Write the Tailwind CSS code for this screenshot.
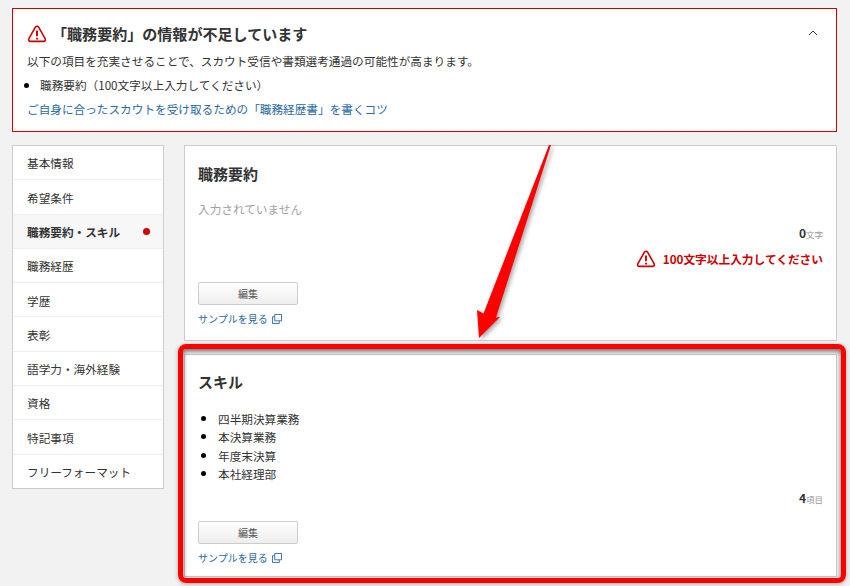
<!DOCTYPE html>
<html lang="ja">

<head>
    <meta charset="UTF-8" />
    <meta name="viewport" content="width=device-width, initial-scale=1.0" />
    <title>職務経歴書</title>
    <script src="https://cdn.jsdelivr.net/npm/@tailwindcss/browser@4"></script>
</head>

<body class="relative w-[850px] h-[586px] overflow-hidden bg-[#f2f2f2] font-['Noto_Sans_CJK_JP','Noto_Sans',sans-serif] text-[11.65px] text-[#333]">

    <div class="pt-2 pl-3 pr-[13px]">
        <!-- alert -->
        <section class="relative h-[124px] border border-[#cc0000] bg-white pl-[14px] pt-[15px]">
            <div class="flex items-center h-5">
                <svg class="w-5 h-5" viewBox="0 0 20 20" fill="none" stroke="#cc0000" stroke-width="1.6" stroke-linejoin="round">
                    <path d="M10 2.2c-.7 0-1.2.4-1.6 1L1.9 14.6c-.7 1.3.1 2.8 1.6 2.8h13c1.5 0 2.3-1.5 1.6-2.8L11.6 3.2c-.4-.6-.9-1-1.6-1z" />
                    <path d="M10 6.6v5.6M10 13.8v1.6" stroke-width="1.9" />
                </svg>
                <h2 class="ml-[5px] text-[15.05px] font-bold leading-5 text-[#333]">「職務要約」の情報が不足しています</h2>
            </div>
            <p class="mt-[8px] leading-[18px]">以下の項目を充実させることで、スカウト受信や書類選考通過の可能性が高まります。</p>
            <ul class="mt-[6px] -ml-[3px] flex items-center leading-[18px]">
                <li class="w-[16px] h-[18px] flex items-center"><span class="block w-[5px] h-[5px] rounded-full bg-black"></span></li>
                <li>職務要約（100文字以上入力してください）</li>
            </ul>
            <a class="block mt-[6px] leading-[18px] text-[#2a6a9e]">ご自身に合ったスカウトを受け取るための「職務経歴書」を書くコツ</a>
            <svg class="absolute right-[18px] top-[19px] w-[10px] h-[10px]" viewBox="0 0 10 10" fill="none" stroke="#333" stroke-width="1">
                <path d="M1 7l4-4 4 4" />
            </svg>
        </section>

        <div class="mt-[13px] flex items-start gap-5">
            <!-- side nav -->
            <nav class="w-[152px] shrink-0 border border-[#ccc] bg-white">
                <a class="flex items-center h-[34.3px] pt-[1px] pl-[14px] border-b border-[#eee]">基本情報</a>
                <a class="flex items-center h-[34.3px] pt-[1px] pl-[14px] border-b border-[#eee]">希望条件</a>
                <a class="flex items-center justify-between h-[34.3px] pt-[1px] pl-[14px] pr-[13px] border-b border-[#eee] bg-[#f7f7f7] font-bold">職務要約・スキル<span class="w-[7px] h-[7px] rounded-full bg-[#cc0000]"></span></a>
                <a class="flex items-center h-[34.3px] pt-[1px] pl-[14px] border-b border-[#eee]">職務経歴</a>
                <a class="flex items-center h-[34.3px] pt-[1px] pl-[14px] border-b border-[#eee]">学歴</a>
                <a class="flex items-center h-[34.3px] pt-[1px] pl-[14px] border-b border-[#eee]">表彰</a>
                <a class="flex items-center h-[34.3px] pt-[1px] pl-[14px] border-b border-[#eee]">語学力・海外経験</a>
                <a class="flex items-center h-[34.3px] pt-[1px] pl-[14px] border-b border-[#eee]">資格</a>
                <a class="flex items-center h-[34.3px] pt-[1px] pl-[14px] border-b border-[#eee]">特記事項</a>
                <a class="flex items-center h-[33px] pt-[2px] pl-[14px]">フリーフォーマット</a>
            </nav>

            <main class="flex-1 flex flex-col gap-[13px]">
                <!-- summary -->
                <section class="h-[196px] border border-[#ccc] bg-white pl-[13px] pr-[13px] pt-[17px]">
                    <h3 class="text-[15px] font-bold leading-[22px]">職務要約</h3>
                    <p class="mt-[15px] leading-[18px] text-[#a0a0a0]">入力されていません</p>
                    <p class="mt-[7px] text-right leading-4 text-[12px] font-bold">0<span class="text-[8.5px] font-normal text-[#999]">文字</span></p>
                    <div class="mt-[7px] flex items-center justify-end h-5 gap-[7px] text-[#cc0000] font-bold text-[11.7px]">
                        <svg class="w-5 h-5" viewBox="0 0 20 20" fill="none" stroke="#cc0000" stroke-width="1.6" stroke-linejoin="round">
                            <path d="M10 2.2c-.7 0-1.2.4-1.6 1L1.9 14.6c-.7 1.3.1 2.8 1.6 2.8h13c1.5 0 2.3-1.5 1.6-2.8L11.6 3.2c-.4-.6-.9-1-1.6-1z" />
                            <path d="M10 6.6v5.6M10 13.8v1.6" stroke-width="1.9" />
                        </svg>
                        100文字以上入力してください
                    </div>
                    <button class="block mt-[13px] w-[100px] h-[23px] border border-[#ccc] rounded-[2px] bg-gradient-to-b from-white to-[#eee] text-[10px] text-[#555]">編集</button>
                    <a class="mt-[5px] flex items-center gap-1 leading-[18px] text-[10px] text-[#2a6a9e]">サンプルを見る
                        <svg class="w-[10px] h-[10px]" viewBox="0 0 11 11" fill="none" stroke="#2a6a9e" stroke-width="1">
                            <path d="M3 .5h7.5v7H3z" />
                            <path d="M3 3H.5v7.5h7.5V7.5" />
                        </svg>
                    </a>
                </section>

                <!-- skills -->
                <section class="h-[223px] border border-[#ccc] bg-white pl-[13px] pr-[13px] pt-[16px]">
                    <h3 class="text-[15px] font-bold leading-[22px]">スキル</h3>
                    <ul class="mt-[17px] pl-5 list-none">
                        <li class="relative leading-[18.4px] before:absolute before:-left-[17px] before:top-[6px] before:w-[5px] before:h-[5px] before:rounded-full before:bg-black">四半期決算業務</li>
                        <li class="relative leading-[18.4px] before:absolute before:-left-[17px] before:top-[6px] before:w-[5px] before:h-[5px] before:rounded-full before:bg-black">本決算業務</li>
                        <li class="relative leading-[18.4px] before:absolute before:-left-[17px] before:top-[6px] before:w-[5px] before:h-[5px] before:rounded-full before:bg-black">年度末決算</li>
                        <li class="relative leading-[18.4px] before:absolute before:-left-[17px] before:top-[6px] before:w-[5px] before:h-[5px] before:rounded-full before:bg-black">本社経理部</li>
                    </ul>
                    <p class="mt-[6px] text-right leading-4 text-[12px] font-bold">4<span class="text-[8.5px] font-normal text-[#999]">項目</span></p>
                    <button class="block mt-[14px] w-[100px] h-[23px] border border-[#ccc] rounded-[2px] bg-gradient-to-b from-white to-[#eee] text-[10px] text-[#555]">編集</button>
                    <a class="mt-[5px] flex items-center gap-1 leading-[18px] text-[10px] text-[#2a6a9e]">サンプルを見る
                        <svg class="w-[10px] h-[10px]" viewBox="0 0 11 11" fill="none" stroke="#2a6a9e" stroke-width="1">
                            <path d="M3 .5h7.5v7H3z" />
                            <path d="M3 3H.5v7.5h7.5V7.5" />
                        </svg>
                    </a>
                </section>
            </main>
        </div>
    </div>

    <!-- red annotation frame and arrow drawn over the screenshot -->
    <div class="absolute left-[178px] top-[344px] w-[668px] h-[239px] border-[5px] border-[#ff0000] rounded-[8px] shadow-[0_1px_4px_rgba(0,0,0,0.3),inset_0_2px_5px_rgba(0,0,0,0.6)]"></div>
    <svg class="absolute left-0 top-0 w-[850px] h-[586px] pointer-events-none drop-shadow-[2px_2px_2px_rgba(0,0,0,0.35)]" viewBox="0 0 850 586">
        <path d="M551 145L496 317.5 500 317 479 338 477 310 483.5 313.5 549 145z" fill="#ff0000" />
    </svg>

</body>

</html>
